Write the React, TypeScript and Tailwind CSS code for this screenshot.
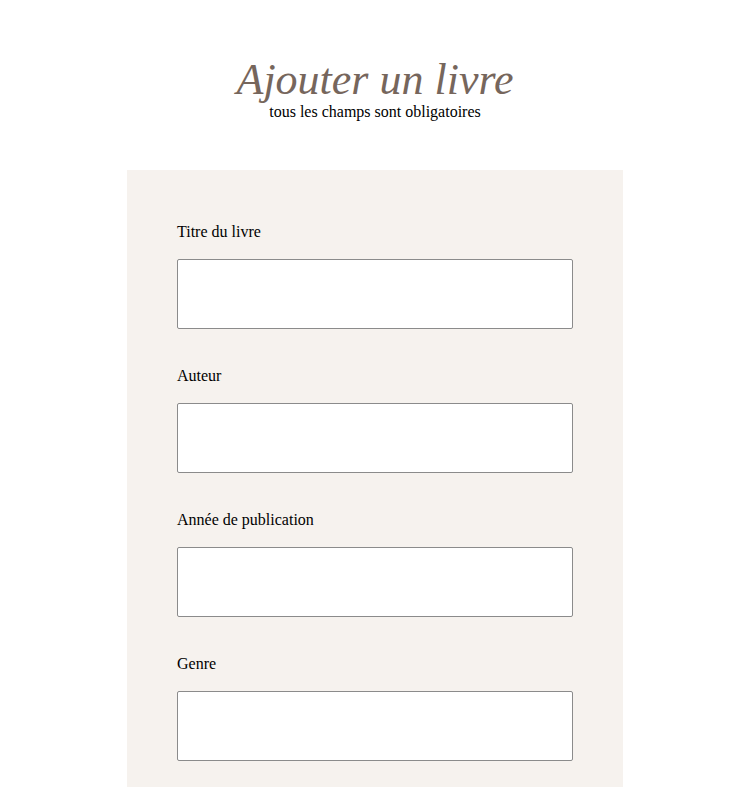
const fields = ['Titre du livre', 'Auteur', 'Année de publication', 'Genre'];

export default function App() {
  return (
    <div className="min-h-[787px] bg-white pl-[6px] font-['Liberation_Serif',serif] text-black">
      <header className="flex flex-col items-center pt-[56px]">
        <h1 className="text-[44px] italic leading-[47px] text-[#76665c]">Ajouter un livre</h1>
        <p className="text-[16px] leading-[18px]">tous les champs sont obligatoires</p>
      </header>

      <form className="mx-auto mt-[49px] flex w-[496px] flex-col gap-[38px] bg-[#f6f2ee] px-[50px] pt-[53px] pb-[26px]">
        {fields.map((label) => (
          <div key={label} className="flex flex-col gap-[18px]">
            <label className="text-[16px] leading-[18px]">{label}</label>
            <input
              type="text"
              className="h-[70px] w-full rounded-[2px] border border-[#8b8b8b] bg-white px-2 outline-none"
            />
          </div>
        ))}
      </form>
    </div>
  );
}
